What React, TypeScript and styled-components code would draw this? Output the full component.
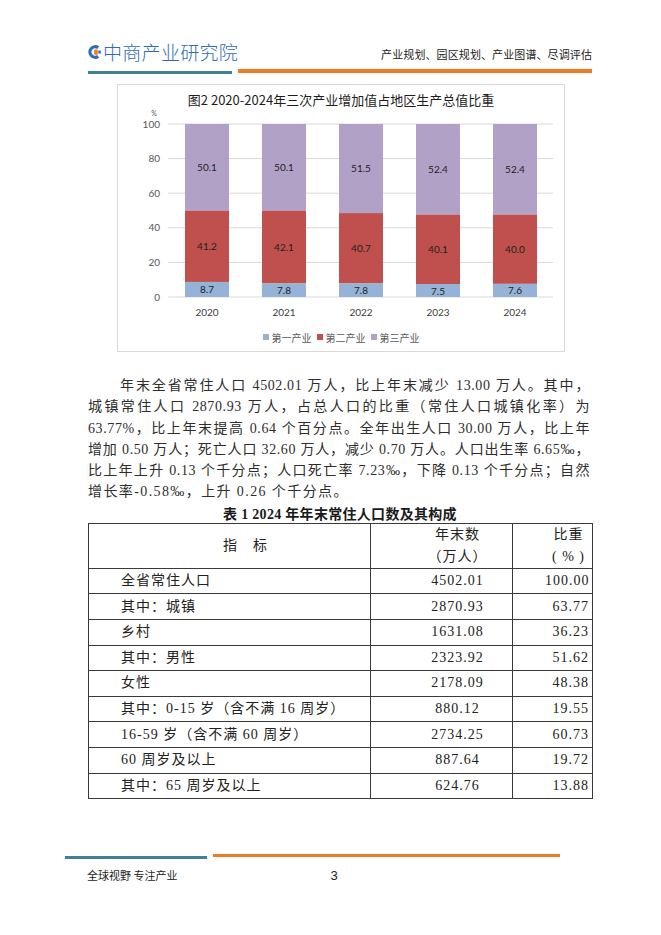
import React from "react";
import styled, { createGlobalStyle } from "styled-components";

const GlobalStyle = createGlobalStyle`
  html, body { margin: 0; padding: 0; background: #ffffff; }
  body { font-family: "Liberation Serif", "Noto Sans CJK SC", serif; color: #222; }
`;

const Page = styled.div`
  width: 661px;
  height: 935px;
  box-sizing: border-box;
  padding-top: 41px;
  display: flex;
  flex-direction: column;
  background: #fff;
  overflow: hidden;
`;

const Header = styled.header`
  display: flex;
  align-items: center;
  justify-content: space-between;
  margin: 0 69px 0 88px;
  height: 22px;
`;

const Logo = styled.div`
  display: flex;
  align-items: center;
  gap: 2px;
`;

const LogoText = styled.span`
  font-family: "Noto Sans CJK SC", sans-serif;
  font-size: 19px;
  font-weight: 300;
  line-height: 22px;
  color: #2f6cb4;
  letter-spacing: 0.3px;
`;

const Services = styled.span`
  font-family: "Noto Sans CJK SC", sans-serif;
  font-size: 11px;
  line-height: 14px;
  color: #222;
  letter-spacing: 0.1px;
  padding-top: 3px;
`;

const Rule = styled.div<{ $left: number; $right: number; $top: number }>`
  display: flex;
  align-items: flex-start;
  gap: 6px;
  height: 5px;
  margin: ${(p) => p.$top}px ${(p) => p.$right}px 0 ${(p) => p.$left}px;
`;

const Bar = styled.div<{ $color: string; $w?: number; $h: number; $dy: number }>`
  background: ${(p) => p.$color};
  height: ${(p) => p.$h}px;
  margin-top: ${(p) => p.$dy}px;
  ${(p) => (p.$w ? `width: ${p.$w}px; flex: none;` : `flex: 1;`)}
`;

const ChartFrame = styled.section`
  margin: 10px 0 0 117px;
  width: 448px;
  height: 268px;
  box-sizing: border-box;
  border: 1px solid #d9d9d9;
  display: flex;
  flex-direction: column;
`;

const ChartTitle = styled.div`
  margin-top: 6px;
  text-align: center;
  font-family: "Noto Sans CJK SC", sans-serif;
  font-size: 13px;
  font-weight: 400;
  line-height: 18px;
  color: #1e1e1e;
`;

const Plot = styled.svg`
  display: block;
  width: 446px;
  height: 214px;
  font-family: "Lato", "Noto Sans CJK SC", sans-serif;
`;

const Legend = styled.div`
  margin-top: 6px;
  display: flex;
  justify-content: center;
  gap: 5px;
  height: 16px;
  align-items: center;
`;

const LegendItem = styled.div`
  display: flex;
  align-items: center;
  gap: 3px;
  font-family: "Noto Sans CJK SC", sans-serif;
  font-size: 10px;
  color: #595959;
`;

const Swatch = styled.span<{ $color: string }>`
  width: 6px;
  height: 6px;
  background: ${(p) => p.$color};
`;

const Paragraph = styled.div`
  margin: 23px 0 0 88px;
  width: 502px;
  font-size: 14px;
  line-height: 21.3px;
  letter-spacing: 0.6px;
  color: #2e2e2e;
`;

const Line = styled.span<{ $indent?: boolean; $last?: boolean }>`
  display: block;
  white-space: nowrap;
  text-align: ${(p) => (p.$last ? "left" : "justify")};
  text-align-last: ${(p) => (p.$last ? "left" : "justify")};
  padding-left: ${(p) => (p.$indent ? 32 : 0)}px;
  ${(p) => (p.$last ? "letter-spacing: 1.4px;" : "")}
`;

const TableTitle = styled.div`
  margin: 4px 0 0 88px;
  width: 504px;
  text-align: center;
  font-size: 14px;
  line-height: 16px;
  font-weight: 700;
  letter-spacing: 0.3px;
  color: #1a1a1a;
`;

const Table = styled.table`
  margin: 0 0 0 88px;
  width: 504px;
  border-collapse: collapse;
  table-layout: fixed;
  font-size: 14px;
  letter-spacing: 1px;
  color: #222;
`;

const HeadRow = styled.tr`
  height: 44px;
`;

const BodyRow = styled.tr`
  height: 25.6px;
`;

const Cell = styled.td<{ $align?: "left" | "center" | "right" }>`
  border: 1px solid #3a3a3a;
  padding: 0 ${(p) => (p.$align === "right" ? 3 : 0)}px 0 32px;
  text-align: ${(p) => p.$align || "left"};
  vertical-align: middle;
  line-height: 22px;
  white-space: nowrap;
  font-weight: 400;
`;

const FooterRow = styled.footer`
  margin-top: 8px;
  display: grid;
  grid-template-columns: 1fr auto 1fr;
  align-items: center;
  height: 16px;
`;

const Slogan = styled.span`
  padding-left: 87px;
  font-family: "Noto Sans CJK SC", sans-serif;
  font-size: 11px;
  color: #222;
`;

const PageNo = styled.span`
  padding-left: 7px;
  font-family: "Liberation Sans", sans-serif;
  font-size: 13px;
  color: #222;
`;

const BLUE = "#95b3d7";
const RED = "#c0504d";
const PURPLE = "#b2a1c7";

const data = [
  { year: "2020", a: 8.7, b: 41.2, c: 50.1 },
  { year: "2021", a: 7.8, b: 42.1, c: 50.1 },
  { year: "2022", a: 7.8, b: 40.7, c: 51.5 },
  { year: "2023", a: 7.5, b: 40.1, c: 52.4 },
  { year: "2024", a: 7.6, b: 40.0, c: 52.4 },
];

const Y0 = 188;
const K = 1.73;
const X0 = 67;
const STEP = 77;
const BW = 44;

const LogoMark = () => (
  <svg width="13" height="14" viewBox="0 0 13 14">
    <path d="M10.2 2.6 A5.3 5.3 0 1 0 10.2 11.4" fill="none" stroke="#2f6cb4" strokeWidth="3.2" />
    <rect x="6.2" y="4.4" width="3.6" height="5.4" rx="0.8" fill="#f07b23" />
    <rect x="10.4" y="5.6" width="2.4" height="3" fill="#2f6cb4" />
  </svg>
);

const Chart = () => (
  <Plot viewBox="0 0 446 214">
    <text x="36" y="7" fontSize="7" fill="#595959" textAnchor="middle">%</text>
    {[0, 20, 40, 60, 80, 100].map((v) => {
      const y = Y0 - v * K;
      return (
        <g key={v}>
          <line x1="50" x2="435" y1={y} y2={y} stroke="#d9d9d9" strokeWidth="1" />
          <text x="42" y={y + 3.5} fontSize="10" fill="#595959" textAnchor="end">
            {v}
          </text>
        </g>
      );
    })}
    {data.map((d, i) => {
      const x = X0 + i * STEP;
      const ha = d.a * K;
      const hb = d.b * K;
      const yb = Y0 - ha - hb;
      const yc = Y0 - 100 * K;
      const hc = yb - yc;
      const cx = x + BW / 2;
      return (
        <g key={d.year}>
          <rect x={x} y={yc} width={BW} height={hc} fill={PURPLE} />
          <rect x={x} y={yb} width={BW} height={hb} fill={RED} />
          <rect x={x} y={Y0 - ha} width={BW} height={ha} fill={BLUE} />
          <text x={cx} y={yc + hc / 2 + 3.5} fontSize="10" fill="#222" textAnchor="middle">
            {d.c.toFixed(1)}
          </text>
          <text x={cx} y={yb + hb / 2 + 3.5} fontSize="10" fill="#222" textAnchor="middle">
            {d.b.toFixed(1)}
          </text>
          <text x={cx} y={Y0 - ha / 2 + 4} fontSize="10" fill="#222" textAnchor="middle">
            {d.a.toFixed(1)}
          </text>
          <text x={cx} y="206.5" fontSize="10" fill="#404040" textAnchor="middle">
            {d.year}
          </text>
        </g>
      );
    })}
  </Plot>
);

const rows: [string, string, string][] = [
  ["全省常住人口", "4502.01", "100.00"],
  ["其中：城镇", "2870.93", "63.77"],
  ["乡村", "1631.08", "36.23"],
  ["其中：男性", "2323.92", "51.62"],
  ["女性", "2178.09", "48.38"],
  ["其中：0-15 岁（含不满 16 周岁）", "880.12", "19.55"],
  ["16-59 岁（含不满 60 周岁）", "2734.25", "60.73"],
  ["60 周岁及以上", "887.64", "19.72"],
  ["其中：65 周岁及以上", "624.76", "13.88"],
];

export default function App() {
  return (
    <Page>
      <GlobalStyle />
      <Header>
        <Logo>
          <LogoMark />
          <LogoText>中商产业研究院</LogoText>
        </Logo>
        <Services>产业规划、园区规划、产业图谱、尽调评估</Services>
      </Header>
      <Rule $left={88} $right={69} $top={6}>
        <Bar $color="#3f8094" $w={144} $h={3} $dy={2} />
        <Bar $color="#f07b23" $h={4} $dy={0} />
      </Rule>

      <ChartFrame>
        <ChartTitle>图2 2020-2024年三次产业增加值占地区生产总值比重</ChartTitle>
        <Chart />
        <Legend>
          <LegendItem>
            <Swatch $color={BLUE} />
            第一产业
          </LegendItem>
          <LegendItem>
            <Swatch $color={RED} />
            第二产业
          </LegendItem>
          <LegendItem>
            <Swatch $color={PURPLE} />
            第三产业
          </LegendItem>
        </Legend>
      </ChartFrame>

      <Paragraph>
        <Line $indent>年末全省常住人口 4502.01 万人，比上年末减少 13.00 万人。其中，</Line>
        <Line>城镇常住人口 2870.93 万人，占总人口的比重（常住人口城镇化率）为</Line>
        <Line>63.77%，比上年末提高 0.64 个百分点。全年出生人口 30.00 万人，比上年</Line>
        <Line>增加 0.50 万人；死亡人口 32.60 万人，减少 0.70 万人。人口出生率 6.65‰，</Line>
        <Line>比上年上升 0.13 个千分点；人口死亡率 7.23‰，下降 0.13 个千分点；自然</Line>
        <Line $last>增长率-0.58‰，上升 0.26 个千分点。</Line>
      </Paragraph>

      <TableTitle>表 1 2024 年年末常住人口数及其构成</TableTitle>
      <Table>
        <colgroup>
          <col style={{ width: 282 }} />
          <col style={{ width: 142 }} />
          <col style={{ width: 80 }} />
        </colgroup>
        <thead>
          <HeadRow>
            <Cell as="th" $align="center">
              指　标
            </Cell>
            <Cell as="th" $align="center">
              年末数
              <br />
              （万人）
            </Cell>
            <Cell as="th" $align="center">
              比重
              <br />( % )
            </Cell>
          </HeadRow>
        </thead>
        <tbody>
          {rows.map(([name, num, pct]) => (
            <BodyRow key={name}>
              <Cell>{name}</Cell>
              <Cell $align="center">{num}</Cell>
              <Cell $align="right">{pct}</Cell>
            </BodyRow>
          ))}
        </tbody>
      </Table>

      <Rule $left={65} $right={101} $top={55}>
        <Bar $color="#3f8094" $w={142} $h={3} $dy={2} />
        <Bar $color="#f07b23" $h={3} $dy={0} />
      </Rule>
      <FooterRow>
        <Slogan>全球视野 专注产业</Slogan>
        <PageNo>3</PageNo>
        <span />
      </FooterRow>
    </Page>
  );
}
